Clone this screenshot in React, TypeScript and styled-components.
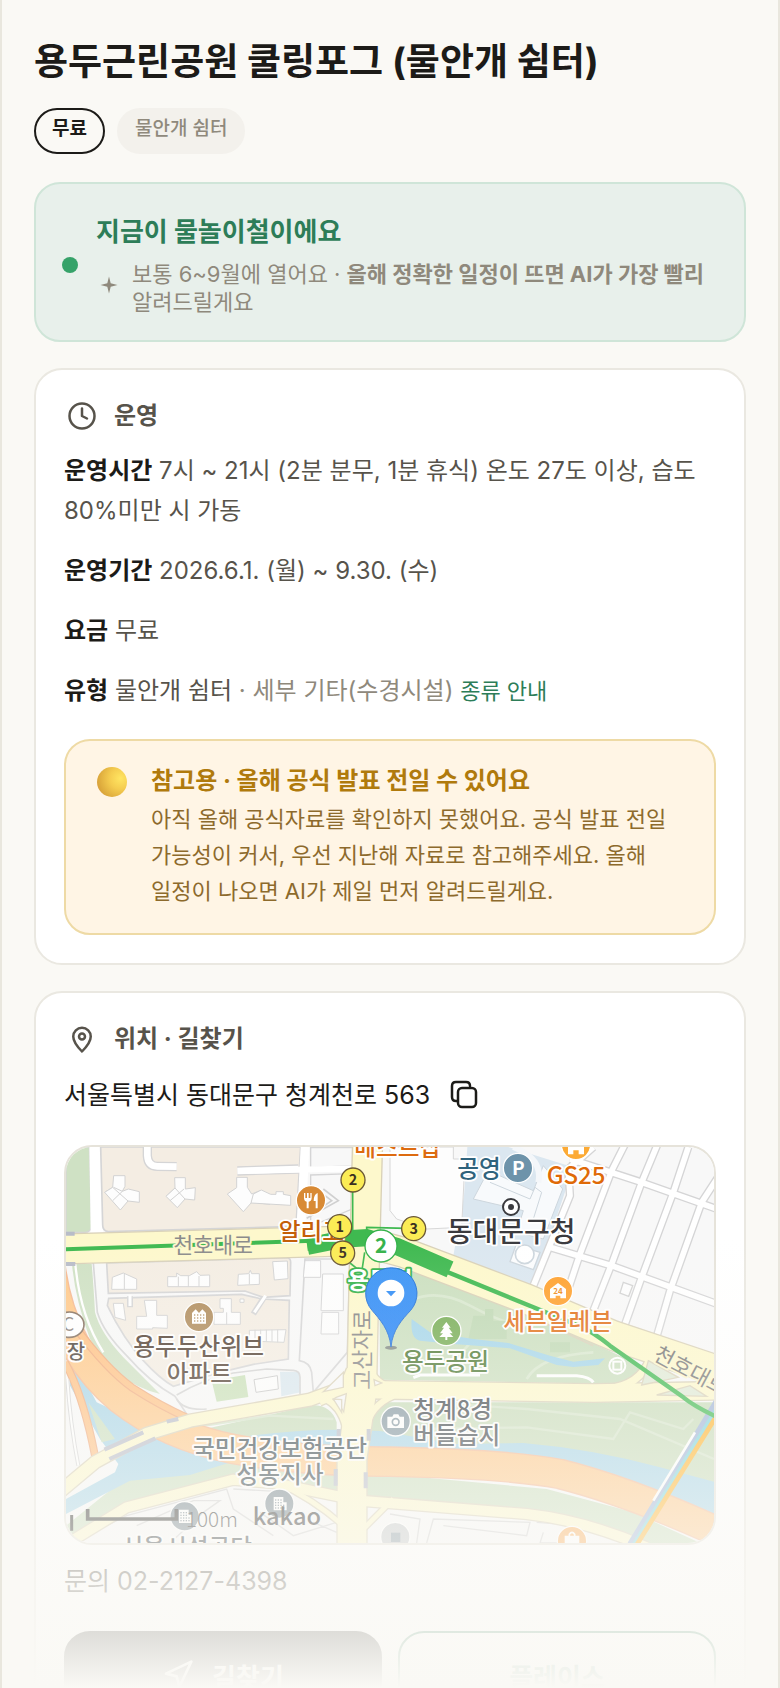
import React from "react";
import styled, { createGlobalStyle, css } from "styled-components";
import { Clock, Navigation } from "lucide-react";

const GlobalStyle = createGlobalStyle`
  *, *::before, *::after { box-sizing: border-box; }
  body {
    margin: 0;
    background: #faf9f5;
    color: #1c1b18;
    font-family: Inter, "Noto Sans CJK KR", sans-serif;
    word-break: keep-all;
  }
  h1, h2, h3, p, dl, dd { margin: 0; }
`;

const Page = styled.main`
  position: relative;
  height: 100vh;
  overflow: hidden;
  padding: 36px 32px 0;
  border: solid #e9e7de;
  border-width: 0 2px;
`;

const Title = styled.h1`
  font-size: 37px;
  font-weight: 700;
  line-height: 52px;
`;

const Tags = styled.div`
  display: flex;
  gap: 12px;
  margin: 20px 0 28px;
`;

const Tag = styled.span<{ $strong?: boolean }>`
  height: 46px;
  padding: 0 16px;
  border: 2px solid ${(p) => (p.$strong ? "#1c1b18" : "#f3f1ec")};
  border-radius: 23px;
  background: ${(p) => (p.$strong ? "#faf9f5" : "#f3f1ec")};
  color: ${(p) => (p.$strong ? "#1c1b18" : "#8f897c")};
  font-size: 19px;
  font-weight: ${(p) => (p.$strong ? 700 : 500)};
  line-height: 38px;
`;

const Stack = styled.div`
  display: flex;
  flex-direction: column;
  gap: 26px;
`;

const Season = styled.section`
  display: flex;
  align-items: center;
  gap: 18px;
  padding: 29px 26px 24px;
  border: 2px solid #cfe5d8;
  border-radius: 26px;
  background: #e8f0eb;
`;

const Dot = styled.span`
  flex: none;
  width: 16px;
  height: 16px;
  border-radius: 50%;
  background: #36a269;
`;

const SeasonTitle = styled.h2`
  color: #2d7d58;
  font-size: 26px;
  font-weight: 700;
  line-height: 38px;
`;

const SeasonNote = styled.p`
  display: flex;
  align-items: flex-start;
  gap: 14px;
  margin-top: 9px;
  padding-left: 4px;
  color: #8f897c;
  font-size: 22px;
  line-height: 28px;

  svg { flex: none; margin-top: 16px; }
`;

const Card = styled.section`
  padding: 27px 28px 28px;
  border: 2px solid #eae8e1;
  border-radius: 28px;
  background: #ffffff;
`;

const CardTitle = styled.h2`
  display: flex;
  align-items: center;
  gap: 17px;
  padding-left: 3px;
  color: #57534b;
  font-size: 24px;
  font-weight: 700;
  line-height: 38px;
`;

const Facts = styled.dl`
  display: grid;
  gap: 20px;
  margin-top: 16px;
  color: #57534b;
  font-size: 24px;
  line-height: 40px;

  dt, dd { display: inline; }
  dt { color: #1c1b18; font-weight: 700; }
`;

const Muted = styled.span`
  color: #8f897c;
`;

const GuideLink = styled.a`
  color: #2d7d58;
  font-size: 22px;
  text-decoration: none;
`;

const Notice = styled.aside`
  display: grid;
  grid-template-columns: 30px 1fr;
  gap: 24px;
  margin-top: 28px;
  padding: 20px 31px 24px;
  border: 2px solid #eedaa5;
  border-radius: 26px;
  background: #fff5e5;
  color: #8d6a2c;
  font-size: 22px;
  line-height: 36px;
`;

const Ball = styled.span`
  width: 30px;
  height: 30px;
  margin-top: 6px;
  border-radius: 50%;
  background: radial-gradient(circle at 78% 38%, #ffe562 0%, #f5cd50 35%, #dba73b 75%, #d98a55 100%);
`;

const NoticeTitle = styled.h3`
  color: #b07a0c;
  font-size: 24px;
  font-weight: 700;
  line-height: 40px;
`;

const Address = styled.address`
  display: flex;
  align-items: center;
  gap: 18px;
  margin-top: 17px;
  font-size: 25px;
  font-style: normal;
  line-height: 40px;
`;

const IconButton = styled.button`
  display: flex;
  padding: 0;
  border: 0;
  background: none;
  color: #1c1b18;
`;

const MapFrame = styled.figure`
  height: 400px;
  margin: 30px 0 16px;
  overflow: hidden;
  border: 2px solid #e6e3da;
  border-radius: 28px;

  svg { display: block; width: 100%; height: 100%; }
  text { font-family: "Noto Sans CJK KR", sans-serif; }
`;

const Contact = styled.p`
  color: #57534b;
  font-size: 25px;
  line-height: 40px;
`;

const Actions = styled.div`
  display: grid;
  grid-template-columns: 1fr 1fr;
  gap: 16px;
  margin-top: 30px;
`;

const Action = styled.button<{ $primary?: boolean }>`
  display: flex;
  align-items: center;
  justify-content: center;
  gap: 18px;
  height: 88px;
  border-radius: 26px;
  font: inherit;
  font-size: 26px;
  font-weight: 700;
  ${(p) =>
    p.$primary
      ? css`border: 2px solid #1c1b18; background: #1c1b18; color: #ffffff;`
      : css`border: 2px solid #2d7d58; background: #ffffff; color: #2d7d58;`}
`;

const Fade = styled.div`
  position: absolute;
  inset: auto 0 0;
  height: 450px;
  background: linear-gradient(rgba(250, 249, 245, 0), #faf9f5);
  pointer-events: none;
`;

const PinIcon = () => (
  <svg width="30" height="30" viewBox="0 0 24 24" fill="none" stroke="currentColor" strokeWidth="2" strokeLinejoin="round" aria-hidden>
    <path d="M12 22c-4.6-4.7-7-8.4-7-12a7 7 0 0 1 14 0c0 3.600-2.400 7.300-7 12z" />
    <circle cx="12" cy="10" r="2.400" />
  </svg>
);

const CopyIcon = () => (
  <svg width="32" height="32" viewBox="0 0 32 32" fill="none" stroke="currentColor" strokeWidth="2.500" strokeLinecap="round" aria-hidden>
    <rect x="10" y="9" width="18" height="19" rx="4" />
    <path d="M9 22H8Q4 22 4 18V7Q4 3 8 3H18Q22 3 22 7" />
  </svg>
);

const Spark = () => (
  <svg width="18" height="18" viewBox="0 0 18 18" fill="currentColor" aria-hidden>
    <path d="M9 0.500 L10.700 7.300 L17.500 9 L10.700 10.700 L9 17.500 L7.300 10.700 L0.500 9 L7.300 7.300Z" />
  </svg>
);

type LabelProps = {
  x: number;
  y: number;
  fill: string;
  size?: number;
  weight?: number;
  anchor?: "start" | "middle";
  angle?: number;
  halo?: string;
  children: React.ReactNode;
};

const Label = ({ x, y, fill, size = 71, weight = 500, anchor = "start", angle, halo = "#ffffff", children }: LabelProps) => (
  <text
    x={x}
    y={y}
    fill={fill}
    fontSize={size}
    fontWeight={weight}
    textAnchor={anchor}
    stroke={halo}
    strokeWidth="11"
    strokeLinejoin="round"
    paintOrder="stroke"
    transform={angle ? `rotate(${angle} ${x} ${y})` : undefined}
  >
    {children}
  </text>
);

const Exit = ({ x, y, n }: { x: number; y: number; n: number }) => (
  <g>
    <circle cx={x} cy={y} r="36" fill="#fbec55" stroke="#6b5835" strokeWidth="4" />
    <text x={x} y={y + 16} fontSize="43" fontWeight="700" textAnchor="middle" fill="#3a3020">{n}</text>
  </g>
);

const Poi = ({ x, y, fill, r = 44, children }: { x: number; y: number; fill: string; r?: number; children: React.ReactNode }) => (
  <g transform={`translate(${x} ${y})`}>
    <circle r={r} fill={fill} stroke="#ffffff" strokeWidth="4" />
    {children}
  </g>
);

const Office = ({ dot }: { dot: string }) => (
  <g>
    <path d="M-17 -20H12V-4H22V20H-17Z" fill="#fff" />
    {[-12, -4, 4, 12].map((x) =>
      [-13, -5, 3, 11].map((y) =>
        x === 12 && y < -4 ? null : <rect key={`${x}${y}`} x={x - 1} y={y} width="4" height="4" fill={dot} />
      )
    )}
  </g>
);

/* A street: grey casing first, white surface over it, so crossings stay open. */
const Streets = ({ d, width = 17 }: { d: string; width?: number }) => (
  <g fill="none" strokeLinejoin="round">
    <path d={d} stroke="#d5d5d6" strokeWidth={width + 8} />
    <path d={d} stroke="#ffffff" strokeWidth={width} />
  </g>
);

const ParkMap = () => (
  <svg viewBox="18 24 1944 1188" preserveAspectRatio="xMidYMid slice" role="img" aria-label="용두근린공원 주변 지도">
    <rect x="-400" y="0" width="2800" height="1300" fill="#f8f8f8" />

    {/* parks and blocks on the west side */}
    <path d="M18 24H88L95 262Q92 280 75 280H18Z" fill="#cfe1c4" stroke="#d5d5d6" strokeWidth="4" />
    <path d="M88 24H124L130 280H92Z" fill="#fff" />
    <path d="M122 24H722L708 262L145 278Q128 276 128 258Z" fill="#f4ede3" stroke="#d5d5d6" strokeWidth="5" />
    <path d="M140 372L682 356Q692 358 692 370L690 470L610 475L555 456L145 463Z" fill="#f4ede3" stroke="#d5d5d6" strokeWidth="5" />
    <path d="M146 478L545 466L605 480L688 484L685 660L580 676L480 700L340 742Q300 720 250 665Q190 600 142 500Z" fill="#f4ede3" stroke="#d5d5d6" strokeWidth="5" />
    <path d="M100 372L112 520Q130 580 200 650Q270 730 345 772L380 825" fill="none" stroke="#d5d5d6" strokeWidth="5" />
    <path d="M36 375H95Q100 430 105 520Q120 580 190 655L300 765Q160 730 90 600Q45 480 36 375Z" fill="#cfe1c4" />
    <path d="M46 375Q60 530 130 640" fill="none" stroke="#fff" strokeWidth="7" />
    <path d="M735 360H870L862 640L760 760L755 700Q750 670 718 665Z" fill="#f8f8f8" stroke="#d5d5d6" strokeWidth="5" />
    <path d="M735 365H782V415H730ZM788 405H850V515H783ZM786 520H836V585H783Z" fill="#fdfdfd" stroke="#d5d5d6" strokeWidth="3" />
    <path d="M752 26H878V80L752 86ZM752 108L876 104V210L752 262Z" fill="#f8f8f8" stroke="#d5d5d6" strokeWidth="4" />
    <path d="M790 150L835 185L740 238M795 170L815 185L790 202" fill="none" stroke="#d0d0d0" strokeWidth="5" />
    <Streets d="M262 10V50Q264 82 292 82L350 83" width={20} />
    <Streets d="M532 96L715 90" width={20} />
    <path d="M534 96L900 88" stroke="#fff" strokeWidth="18" />
    <path d="M735 24L722 280" stroke="#fff" strokeWidth="26" />
    <path d="M612 475L580 525M210 472V505" stroke="#d5d5d6" strokeWidth="18" />
    <path d="M617 470L583 520M210 467V501" stroke="#fff" strokeWidth="9" />
    <g fill="#fdfdfd" stroke="#d3d3d3" strokeWidth="3">
      <path d="M161 110H195V142L187 157L205 150L238 158V190L204 186L181 213L134 160L158 145Z" />
      <path d="M134 160L158 145L204 186M161 145L187 157L158 185" />
      <path d="M344 116H376V150L406 146L404 183L375 180L352 206L318 172L345 147Z" />
      <path d="M318 172L345 147L375 180M330 185L372 150" />
      <path d="M530 115H562V145L575 165L600 155L602 166H625L630 196L575 190L550 218L502 165L530 146Z" />
      <path d="M604 153L632 166H648V158H670V166L692 170V199L573 192L580 165Z" />
      <path d="M157 415L190 402L230 420V451H155ZM193 402V451" />
      <path d="M323 413H350V402L362 410H388L410 398L420 409L449 408V443H323ZM355 413V443M385 411V443M417 411V443" />
      <path d="M535 406L566 404L571 394L575 404H598V436L533 439ZM568 404V436" />
      <path d="M638 368L682 366L684 419L643 423Z" />
      <path d="M160 493H190L197 544L165 535ZM253 484H290V529H322V568L278 566V570H230V532H260Z" />
      <path d="M480 479H514V520H541V556H462V520H490V508H480ZM500 520V556M540 480H552V490H540Z" />
      <path d="M568 574L678 572L672 610L568 606ZM585 572V608M602 572V608M619 572V608M636 572V608M653 572V610" />
    </g>
    <path d="M455 725L555 708L565 774L470 788Z" fill="#c9e0b8" />
    <path d="M582 722L652 710L655 750L588 760Z" fill="#fdfdfd" stroke="#c8c8c8" strokeWidth="3" />
    <path d="M660 698L718 698L722 760L664 772Z" fill="#d9e7ef" />
    <path d="M350 768Q430 720 520 702L620 690L700 694Q720 696 720 715V765M350 780Q370 815 440 810" fill="none" stroke="#d3d3d3" strokeWidth="5" />

    {/* civic block */}
    <path d="M1222 24H1345L1540 85L1420 442L1180 350L1212 170Z" fill="#dbe7f0" />
    <path d="M990 24H1180V60H1215L1205 265L1100 270L1010 240L990 215Z" fill="#fdfdfd" stroke="#d8d8d8" strokeWidth="3" />
    <path d="M1285 95L1420 155L1450 80L1508 150L1450 300L1370 280L1390 215L1240 180Z" fill="#f8fafc" stroke="#cdd6dd" strokeWidth="3" />
    <path d="M1290 130L1410 180L1425 145L1445 160L1420 240" fill="none" stroke="#cdd6dd" strokeWidth="3" />
    <path d="M1368 318L1440 340L1420 392L1350 368Z" fill="#fbfcfd" stroke="#cdd6dd" strokeWidth="4" />
    <circle cx="1394" cy="346" r="28" fill="#fff" stroke="#cdd6dd" strokeWidth="5" />
    <path d="M1360 24Q1450 60 1435 130" fill="none" stroke="#f4f7fa" strokeWidth="18" />

    {/* street grid to the east */}
    <Streets d="M1530 60L1745 130L1985 215M1460 322L1655 380L1985 500M1600 24L1525 90L1530 170L1412 460M1698 10L1655 95L1560 345L1515 480M1795 10L1745 130L1655 375L1598 520M1885 24L1840 160L1745 415L1690 570M1990 90L1925 190L1830 455L1785 610" />
    <path d="M1690 430L1718 440L1706 472L1680 462Z" fill="#fdfdfd" stroke="#d3d3d3" strokeWidth="4" />

    {/* parkland and riverbank */}
    <path d="M958 400L1060 395L1300 482L1610 618L1745 680Q1735 735 1690 735L960 722Z" fill="#cbdfbf" />
    <path d="M1060 395L1300 482L1600 620" fill="none" stroke="#dad2ba" strokeWidth="5" />
    <path d="M1000 520Q1100 430 1230 500T1420 560M1120 690Q1240 640 1250 560M1400 720Q1440 650 1600 640" fill="none" stroke="#d9e8cf" strokeWidth="8" />
    <path d="M1240 530H1275V510H1300V545H1340V600H1225ZM1470 610H1530V640H1470ZM1180 640H1230V665H1180Z" fill="#c0d9b5" />
    <path d="M1055 540L1110 580L1240 600L1345 612L1470 650L1540 668L1635 658L1615 678L1540 684L1490 678L1350 628L1180 615L1080 605Q1050 600 1055 540Z" fill="#a6d6ea" />
    <path d="M1060 716L1080 708H1260M1430 710H1550Q1590 714 1600 730" fill="none" stroke="#fff" strokeWidth="9" />
    <path d="M390 880L760 798Q815 800 830 850V900H400ZM930 790H1970V1080L1500 960L920 900Z" fill="#c8dcba" />
    <path d="M1110 790L1400 810L1680 840L1962 960M1080 870L1400 865L1660 900L1710 820L1870 870L1900 840M400 865L630 830L820 840" fill="none" stroke="#d6e5cb" strokeWidth="7" />
    <path d="M18 1160L180 1030L520 950L850 980V1060L500 1010L220 1090L40 1190ZM920 1000L1460 1050L1720 1120L1960 1230H1800L1500 1140L920 1080Z" fill="#cbdfbf" />
    <path d="M18 620L110 790L260 860L400 940L560 955L390 1008L210 1025L18 1125V1080L165 1000L175 975L120 900L30 740Z" fill="#a8d5e8" />
    <path d="M85 790L165 900L125 910Z" fill="#cbdfbf" />
    <path d="M450 910Q650 872 830 872L960 876L1190 915L1390 912Q1600 930 1800 985L1970 1030V1160L1500 1000L990 960L480 950Z" fill="#a8d5e8" />

    {/* expressway */}
    <g fill="none">
      <path d="M-30 370Q0 630 180 780Q320 890 520 930Q740 970 990 968Q1340 975 1500 1005Q1720 1060 2020 1200" stroke="#f5b891" strokeWidth="92" />
      <path d="M-30 370Q0 630 180 780Q320 890 520 930Q740 970 990 968Q1340 975 1500 1005Q1720 1060 2020 1200" stroke="#ffc98a" strokeWidth="84" />
      <path d="M50 570Q140 690 215 745Q300 800 385 838M15 670Q70 770 105 950" stroke="#f0aa7c" strokeWidth="24" />
      <path d="M50 570Q140 690 215 745Q300 800 385 838M15 670Q70 770 105 950" stroke="#ffc183" strokeWidth="17" />
      <path d="M22 720Q30 850 55 980" stroke="#d5d5d6" strokeWidth="12" />
      <path d="M22 720Q30 850 55 980" stroke="#fff" strokeWidth="6" />
    </g>

    {/* lower blocks */}
    <g fill="none" stroke="#d2d2d2" strokeWidth="4">
      <path d="M60 1200L200 1130L500 1050L520 1110L640 1190M230 1160L400 1085H480L430 1120L330 1212M520 1050L700 1060L830 1150L700 1190L600 1120M760 1150L830 1180M990 1125L1080 1140L1070 1212M1100 1212L1120 1140L1410 1150L1400 1190L1150 1160M1430 1150L1560 1160L1580 1212H1440L1450 1180M1600 1170L1700 1212" />
    </g>

    {/* arterial roads */}
    <g fill="none" strokeLinejoin="round">
      {[
        { c: "#d9d1b8", e: 8 },
        { c: "#fdf8cc", e: 0 },
      ].map(({ c, e }) => (
        <g key={c} stroke={c}>
          <path d="M0 1058L105 970L260 885L390 845L750 782L880 735" strokeWidth={36 + e} />
          <path d="M920 752L1600 762L1990 755" strokeWidth={52 + e} />
          <path d="M1640 750Q1740 740 1770 660" strokeWidth={22 + e} />
          <path d="M20 1215L200 1105L520 1022L640 1032L850 1075M900 1085L1400 1125Q1580 1145 1760 1225" strokeWidth={30 + e} />
          <path d="M650 1030Q760 1080 850 1160M900 1180L1000 1080" strokeWidth={14 + e} />
          <path d="M923 0L912 420L905 760L876 960V1230" strokeWidth={86 + e} />
          <path d="M780 790Q840 770 870 690M800 782Q850 810 860 880M1000 752Q930 720 930 680M1000 770Q930 800 918 870" strokeWidth={18 + e} />
          <path d="M0 330L900 305L1030 340L1400 480L1660 590L1990 700" strokeWidth={86 + e} />
        </g>
      ))}
    </g>
    <path d="M790 758L850 700V745ZM820 780L845 782V820ZM942 722L965 732L945 740Z" fill="#f8f8f8" stroke="#d9d1b8" strokeWidth="4" />
    <path d="M1765 665L1855 715L1745 738ZM1790 768L1890 740L1940 772Z" fill="#e0ead6" stroke="#d9d1b8" strokeWidth="4" />
    <path d="M133 932L250 880M148 960L286 898M320 848L355 840M836 870V900M926 870V905M827 990V1040M917 1000V1048M18 284H44M18 375H46" stroke="#b8bcc8" strokeWidth="12" />

    {/* railway bridge */}
    <g fill="none">
      <path d="M1970 785L1710 1215" stroke="#9fb4d8" strokeWidth="16" />
      <path d="M1975 800L1722 1215" stroke="#7fd4dc" strokeWidth="12" />
      <path d="M1905 880L1780 1085" stroke="#fff" strokeWidth="8" />
      <path d="M1975 822L1730 1218" stroke="#ffb52e" strokeWidth="14" />
    </g>

    {/* subway line and station */}
    <g fill="none" stroke="#3fb950">
      <path d="M0 331L760 305" strokeWidth="12" />
      <path d="M1160 398L1560 562Q1600 580 1650 620L1870 775Q1900 800 1970 834" strokeWidth="13" />
      <path d="M742 322L850 300L920 296L1010 322L1170 391" strokeWidth="52" />
      <path d="M742 318L850 312" strokeWidth="34" />
      <path d="M878 150V290M920 295V265L1040 268M870 372L905 400L914 340" strokeWidth="5" />
    </g>

    <Label x={340} y={342} size={65} fill="#8b8b8b" halo="#fdf8cc" weight={400}>천호대로</Label>
    <Label x={930} y={752} size={65} fill="#858585" halo="#fdf8cc" weight={400} angle={-90}>고산자로</Label>
    <Label x={1776} y={660} size={65} fill="#767676" halo="#fdf8cc" weight={400} angle={28}>천호대로</Label>

    <Label x={883} y={50} size={71} fill="#dd6b10">베스트샵</Label>
    <Label x={1192} y={114} size={71} fill="#2f637d">공영</Label>
    <Label x={1460} y={136} size={72} fill="#df6a08">GS25</Label>
    <Label x={1160} y={310} size={84} fill="#3a3a3e">동대문구청</Label>
    <Label x={656} y={302} fill="#c45f08">알리고</Label>
    <Label x={1330} y={574} fill="#e2701a">세븐일레븐</Label>
    <Label x={220} y={648} fill="#4f3d30">용두두산위브</Label>
    <Label x={418} y={730} fill="#4f3d30" anchor="middle">아파트</Label>
    <Label x={20} y={660} size={60} fill="#4a4038">장</Label>
    <Label x={1026} y={694} fill="#4d7833">용두공원</Label>
    <Label x={1060} y={836} fill="#3f464c">청계8경</Label>
    <Label x={1060} y={914} fill="#3f464c">버들습지</Label>
    <Label x={660} y={954} fill="#36454b" anchor="middle">국민건강보험공단</Label>
    <Label x={660} y={1032} fill="#36454b" anchor="middle">성동지사</Label>
    <Label x={380} y={1252} fill="#30383c" anchor="middle">서울시설공단</Label>
    <Label x={862} y={450} fill="#ffffff" halo="#34b24a" weight={700}>용두역</Label>

    <ellipse cx="28" cy="557" rx="44" ry="38" fill="#fff" stroke="#85705f" strokeWidth="5" />
    <text x="8" y="576" fontSize="54" fill="#8b8178">C</text>

    <Poi x={753} y={184} fill="#d88a35">
      <path d="M-21 -22V-8Q-21 2 -13 4V24H-7V4Q2 2 2 -8V-22H-2V-7H-7V-22H-12V-7H-17V-22ZM20 -22Q8 -18 8 2H14V24H20Z" fill="#fff" />
    </Poi>
    <Poi x={1374} y={87} fill="#6d93aa">
      <text x="-18" y="20" fontSize="57" fontWeight="700" fill="#fff">P</text>
    </Poi>
    <Poi x={1548} y={18} fill="#fcaa35">
      <path d="M-24 0L0 -20L24 0V28H8V16H-8V28H-24Z" fill="#fff" />
    </Poi>
    <Poi x={1494} y={456} fill="#ffa12e">
      <path d="M-24 -6L0 -24L24 -6V22H7V14H-7V22H-24Z" fill="#fff" />
      <text y="10" fontSize="24" fontWeight="700" textAnchor="middle" fill="#ee8a18">24</text>
    </Poi>
    <Poi x={417} y={534} fill="#b08c5c">
      <path d="M-21 -12L-10 -23L0 -12L10 -23L21 -12V20H-21Z" fill="#fff" />
      {[-15, -6, 3, 12].map((x) => [-8, 1, 10].map((y) => <rect key={`${x}${y}`} x={x} y={y} width="4" height="4" fill="#b08c5c" />))}
    </Poi>
    <Poi x={1159} y={576} fill="#77ad55">
      <path d="M0 -27L13 -10H7L19 7H10L21 18H3V27H-3V18H-21L-10 7H-19L-7 -10H-13Z" fill="#fff" />
    </Poi>
    <Poi x={1007} y={847} fill="#8497a2">
      <path d="M-25 -14H-10L-6 -21H8L12 -14H25V20H-25Z" fill="#fff" />
      <circle r="10" cy="2" fill="none" stroke="#8497a2" strokeWidth="5" />
    </Poi>
    <Poi x={658} y={1094} fill="#75858e"><Office dot="#75858e" /></Poi>
    <Poi x={374} y={1132} fill="#75858e"><Office dot="#75858e" /></Poi>
    <Poi x={1006} y={1194} fill="#c3c7c9">
      <rect x="-13" y="-13" width="28" height="28" fill="#8798a2" />
    </Poi>
    <Poi x={1536} y={1206} fill="#fbab55">
      <path d="M-22 -16H22V24H-22Z" fill="#fff" />
      <path d="M-8 -10V-20Q0 -32 8 -20V-10" fill="none" stroke="#fff" strokeWidth="5" />
    </Poi>
    <g fill="none" stroke="#fff" strokeWidth="6">
      <circle cx="1672" cy="680" r="24" />
      <rect x="1660" y="668" width="24" height="24" />
    </g>
    <circle cx="1353" cy="204" r="24" fill="#fff" stroke="#3a3a3e" strokeWidth="6" />
    <circle cx="1353" cy="204" r="9" fill="#3a3a3e" />

    <Exit x={879} y={123} n={2} />
    <Exit x={839} y={263} n={1} />
    <Exit x={848} y={342} n={5} />
    <Exit x={1061} y={269} n={3} />
    <circle cx="963" cy="321" r="48" fill="#fff" stroke="#34b24a" strokeWidth="4" />
    <text x="963" y="343" fontSize="62" fontWeight="700" textAnchor="middle" fill="#34b24a">2</text>

    <defs>
      <linearGradient id="pinBlue" x1="0" y1="0" x2="0" y2="1">
        <stop offset="0" stopColor="#3c95f5" />
        <stop offset="1" stopColor="#2382f8" />
      </linearGradient>
    </defs>
    <ellipse cx="993" cy="626" rx="18" ry="6" fill="#60646a" opacity="0.700" />
    <path d="M993 624C988 572 960 542 936 514A77 77 0 1 1 1052 514C1026 542 998 572 993 624Z" fill="url(#pinBlue)" stroke="#1f6fd8" strokeWidth="3" />
    <circle cx="993" cy="462" r="40" fill="#fff" />
    <path d="M978 456H1008L993 472Z" fill="#2f8cf6" />

    {/* scale and provider mark */}
    <path d="M83 1110V1140H349V1110" fill="none" stroke="#30302e" strokeWidth="11" />
    <path d="M35 1128V1175" stroke="#30302e" strokeWidth="9" />
    <g fill="#2f2f2f">
      <text x="378" y="1163" fontSize="62" fontWeight="300">100m</text>
      <text x="578" y="1158" fontSize="71" fontWeight="500">kakao</text>
    </g>
  </svg>
);

export default function App() {
  return (
    <>
      <GlobalStyle />
      <Page>
        <Title>용두근린공원 쿨링포그 (물안개 쉼터)</Title>
        <Tags>
          <Tag $strong>무료</Tag>
          <Tag>물안개 쉼터</Tag>
        </Tags>
        <Stack>
          <Season>
            <Dot />
            <div>
              <SeasonTitle>지금이 물놀이철이에요</SeasonTitle>
              <SeasonNote>
                <Spark />
                <span>
                  보통 6~9월에 열어요 · <b>올해 정확한 일정이 뜨면 AI가 가장 빨리</b> 알려드릴게요
                </span>
              </SeasonNote>
            </div>
          </Season>

          <Card>
            <CardTitle>
              <Clock size={30} strokeWidth={2} />
              운영
            </CardTitle>
            <Facts>
              <div>
                <dt>운영시간</dt> <dd>7시 ~ 21시 (2분 분무, 1분 휴식) 온도 27도 이상, 습도 80%미만 시 가동</dd>
              </div>
              <div>
                <dt>운영기간</dt> <dd>2026.6.1. (월) ~ 9.30. (수)</dd>
              </div>
              <div>
                <dt>요금</dt> <dd>무료</dd>
              </div>
              <div>
                <dt>유형</dt>{" "}
                <dd>
                  물안개 쉼터 <Muted>· 세부 기타(수경시설)</Muted> <GuideLink href="#types">종류 안내</GuideLink>
                </dd>
              </div>
            </Facts>
            <Notice>
              <Ball />
              <div>
                <NoticeTitle>참고용 · 올해 공식 발표 전일 수 있어요</NoticeTitle>
                <p>아직 올해 공식자료를 확인하지 못했어요. 공식 발표 전일 가능성이 커서, 우선 지난해 자료로 참고해주세요. 올해 일정이 나오면 AI가 제일 먼저 알려드릴게요.</p>
              </div>
            </Notice>
          </Card>

          <Card>
            <CardTitle>
              <PinIcon />
              위치 · 길찾기
            </CardTitle>
            <Address>
              서울특별시 동대문구 청계천로 563
              <IconButton type="button" aria-label="주소 복사">
                <CopyIcon />
              </IconButton>
            </Address>
            <MapFrame>
              <ParkMap />
            </MapFrame>
            <Contact>문의 02-2127-4398</Contact>
            <Actions>
              <Action type="button" $primary>
                <Navigation size={32} strokeWidth={2} />
                길찾기
              </Action>
              <Action type="button">플레이스</Action>
            </Actions>
          </Card>
        </Stack>
        <Fade />
      </Page>
    </>
  );
}
